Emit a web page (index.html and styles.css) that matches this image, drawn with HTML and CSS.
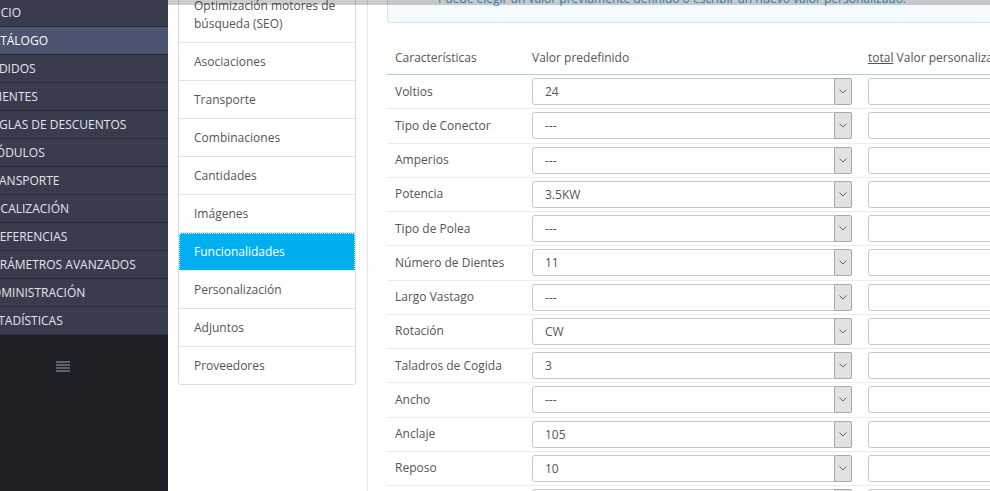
FILE: index.html
```html
<!DOCTYPE html>
<html lang="es">
<head>
    <meta charset="UTF-8">
    <title>Catálogo - Funcionalidades</title>
    <link rel="stylesheet" href="styles.css">
</head>
<body>

<div class="page">
    <!-- Menu lateral -->
    <aside class="sidebar">
        <ul class="menu">
            <li><span>INICIO</span></li>
            <li class="active"><span>CATÁLOGO</span></li>
            <li><span>PEDIDOS</span></li>
            <li><span>CLIENTES</span></li>
            <li><span>REGLAS DE DESCUENTOS</span></li>
            <li><span>MÓDULOS</span></li>
            <li><span>TRANSPORTE</span></li>
            <li><span>LOCALIZACIÓN</span></li>
            <li><span>PREFERENCIAS</span></li>
            <li><span>PARÁMETROS AVANZADOS</span></li>
            <li><span>ADMINISTRACIÓN</span></li>
            <li><span>ESTADÍSTICAS</span></li>
        </ul>
        <div class="collapse">
            <span class="burger"><i></i><i></i><i></i><i></i></span>
        </div>
    </aside>

    <div class="content">
        <!-- Pestañas del producto -->
        <ul class="tabs">
            <li>Optimización motores de búsqueda (SEO)</li>
            <li>Asociaciones</li>
            <li>Transporte</li>
            <li>Combinaciones</li>
            <li>Cantidades</li>
            <li>Imágenes</li>
            <li class="active">Funcionalidades</li>
            <li>Personalización</li>
            <li>Adjuntos</li>
            <li>Proveedores</li>
        </ul>

        <div class="panel">
            <div class="alert">Puede elegir un valor previamente definido o escribir un nuevo valor personalizado.</div>

            <table class="features">
                <colgroup>
                    <col class="col-name">
                    <col class="col-value">
                    <col>
                </colgroup>
                <thead>
                    <tr>
                        <th>Características</th>
                        <th>Valor predefinido</th>
                        <th><u>total</u> Valor personalizado</th>
                    </tr>
                </thead>
                <tbody id="rows"></tbody>
            </table>
        </div>
    </div>

    <div class="header-shadow"></div>
</div>

<script>
    const features = [
        ['Voltios', '24'],
        ['Tipo de Conector', '---'],
        ['Amperios', '---'],
        ['Potencia', '3.5KW'],
        ['Tipo de Polea', '---'],
        ['Número de Dientes', '11'],
        ['Largo Vastago', '---'],
        ['Rotación', 'CW'],
        ['Taladros de Cogida', '3'],
        ['Ancho', '---'],
        ['Anclaje', '105'],
        ['Reposo', '10'],
        ['Peso', '---']
    ];

    const chevron = '<svg width="8" height="5" viewBox="0 0 8 5"><path d="M0.5 0.5 L4 4 L7.5 0.5" fill="none" stroke="#666" stroke-width="1"/></svg>';

    const tbody = document.getElementById('rows');
    features.forEach(function (f) {
        const tr = document.createElement('tr');
        tr.innerHTML =
            '<td>' + f[0] + '</td>' +
            '<td><div class="select"><span class="select-text">' + f[1] + '</span><span class="select-arrow">' + chevron + '</span></div></td>' +
            '<td><div class="text-input"></div></td>';
        tbody.appendChild(tr);
    });
</script>

</body>
</html>
```

FILE: styles.css
```css
html, body {
    margin: 0;
    padding: 0;
    height: 100%;
    font-family: "Open Sans", "Liberation Sans", Arial, sans-serif;
    font-size: 12px;
    color: #555555;
}

body {
    background-color: #ffffff;
    overflow: hidden;
}

.page {
    display: flex;
    height: 491px;
    position: relative; /* para la sombra de la cabecera */
    overflow: hidden;
}

/* ---- menu lateral ---- */
.sidebar {
    flex: 0 0 168px;
    background-color: #1f2127;
    overflow: hidden;
}

.menu {
    list-style: none;
    margin: -1px 0 0 0;
    padding: 0;
    background-color: #383c4c;
}

.menu li {
    height: 27px;
    line-height: 27px;
    border-bottom: 1px solid #2a2d39;
    color: #e3e5ea;
    white-space: nowrap;
}

.menu li span {
    margin-left: -15px; /* menu desplazado horizontalmente */
}

.menu li.active {
    background-color: #4b5470;
    color: #ffffff;
}

.collapse {
    padding: 26px 0 0 56px;
}

.burger {
    display: flex;
    flex-direction: column;
    gap: 1px;
    width: 14px;
}

.burger i {
    display: block;
    height: 2px;
    background-color: #5b6172;
}

/* ---- contenido ---- */
.content {
    display: flex;
    flex: 1;
    min-width: 0;
}

.tabs {
    list-style: none;
    align-self: flex-start;
    flex: 0 0 178px;
    box-sizing: border-box;
    margin: -14px 0 0 10px;
    padding: 0;
    border: 1px solid #dddddd;
    border-radius: 0 0 3px 3px;
    background-color: #ffffff;
}

.tabs li {
    padding: 10px 12px 9px 15px;
    line-height: 18px;
    border-bottom: 1px solid #e3e3e3;
    color: #555555;
}

.tabs li:last-child {
    border-bottom: none;
}

.tabs li.active {
    background-color: #00aff0;
    color: #ffffff;
    outline: 1px dotted rgba(255, 255, 255, 0.85);
    outline-offset: -1px;
}

.panel {
    flex: 0 0 auto;
    width: 700px;
    margin-left: 11px;
    padding-left: 19px;
    border-left: 1px solid #e6e6e6;
}

.alert {
    margin-top: -25px;
    padding: 14px 15px 14px 50px;
    line-height: 18px;
    border: 1px solid #cfe7f1;
    border-radius: 3px;
    background-color: #f5fafd;
    color: #3a9dcc;
    white-space: nowrap;
}

.features {
    margin-top: 17px;
    width: 100%;
    table-layout: fixed;
    border-collapse: collapse;
}

.col-name {
    width: 137px;
}

.col-value {
    width: 336px;
}

.features th {
    padding: 9px 8px 7px;
    line-height: 18px;
    font-weight: normal;
    text-align: left;
    white-space: nowrap;
    border-bottom: 1px solid #a9cfe1;
}

.features td {
    padding: 3px 8px 3.27px;
    line-height: 18px;
    white-space: nowrap;
    border-bottom: 1px solid #ececec;
}

.select {
    display: flex;
    height: 27px;
    box-sizing: border-box;
    border: 1px solid #c9c9c9;
    border-radius: 3px;
    background-color: #ffffff;
}

.select-text {
    flex: 1;
    padding-left: 12px;
    line-height: 25px;
    color: #555555;
}

.select-arrow {
    display: flex;
    align-items: center;
    justify-content: center;
    width: 16px;
    margin: -1px -1px -1px 0;
    border: 1px solid #a8a8a8;
    border-radius: 2px;
    background-color: #e2e2e2;
}

.text-input {
    height: 27px;
    box-sizing: border-box;
    border: 1px solid #c9c9c9;
    border-radius: 3px;
    background-color: #ffffff;
}

/* sombra de la barra superior fija */
.header-shadow {
    position: absolute;
    top: 0;
    left: 168px;
    right: 0;
    height: 5px;
    background-color: rgba(0, 0, 0, 0.2);
}
```
